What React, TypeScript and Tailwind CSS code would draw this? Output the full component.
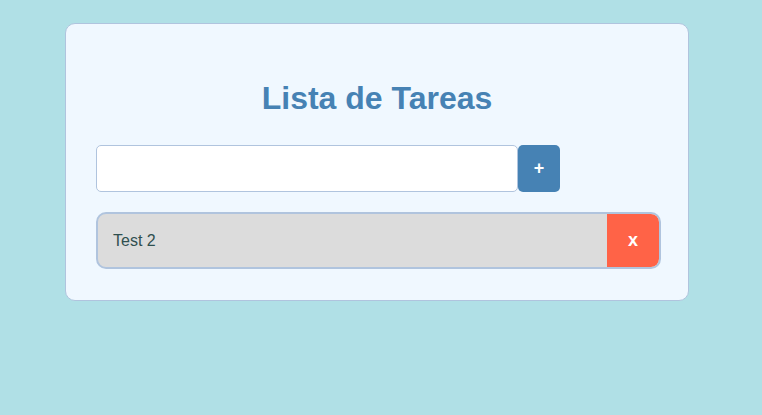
import React, { useState } from "react";

interface Task {
  id: number;
  text: string;
}

const App: React.FC = () => {
  const [tasks, setTasks] = useState<Task[]>([{ id: 2, text: "Test 2" }]);
  const [value, setValue] = useState("");

  const addTask = () => {
    if (!value.trim()) return;
    setTasks([...tasks, { id: Date.now(), text: value.trim() }]);
    setValue("");
  };

  const removeTask = (id: number) => {
    setTasks(tasks.filter((t) => t.id !== id));
  };

  return (
    <div className="min-h-screen bg-[#b0e0e6] pt-[23px] font-['Liberation_Sans',Arial,sans-serif]">
      <div className="ml-[65px] w-[624px] border border-[#b0c4de] rounded-[10px] bg-[#f0f8ff] px-[30px] pt-[56px] pb-[31px]">
        <h1 className="m-0 text-center text-[32px] leading-[37px] font-bold text-[#4682b4] mb-[28px]">
          Lista de Tareas
        </h1>

        <div className="flex">
          <input
            type="text"
            value={value}
            onChange={(e) => setValue(e.target.value)}
            className="w-[422px] h-[47px] border border-[#b0c4de] rounded-[5px] bg-white px-3 text-base outline-none"
          />
          <button
            onClick={addTask}
            className="w-[42px] h-[47px] rounded-[5px] bg-[#4682b4] text-white text-[18px] font-bold"
          >
            +
          </button>
        </div>

        <ul className="mt-[20px]">
          {tasks.map((task) => (
            <li
              key={task.id}
              className="flex items-center w-[565px] h-[57px] border-2 border-[#b0c4de] rounded-[10px] bg-[#dcdcdc] overflow-hidden"
            >
              <span className="flex-1 pl-[15px] text-base text-[#2f4f4f]">{task.text}</span>
              <button
                onClick={() => removeTask(task.id)}
                className="w-[52px] h-full bg-[#ff6347] text-white text-[18px] font-bold rounded-r-[8px]"
              >
                x
              </button>
            </li>
          ))}
        </ul>
      </div>
    </div>
  );
};

export default App;
